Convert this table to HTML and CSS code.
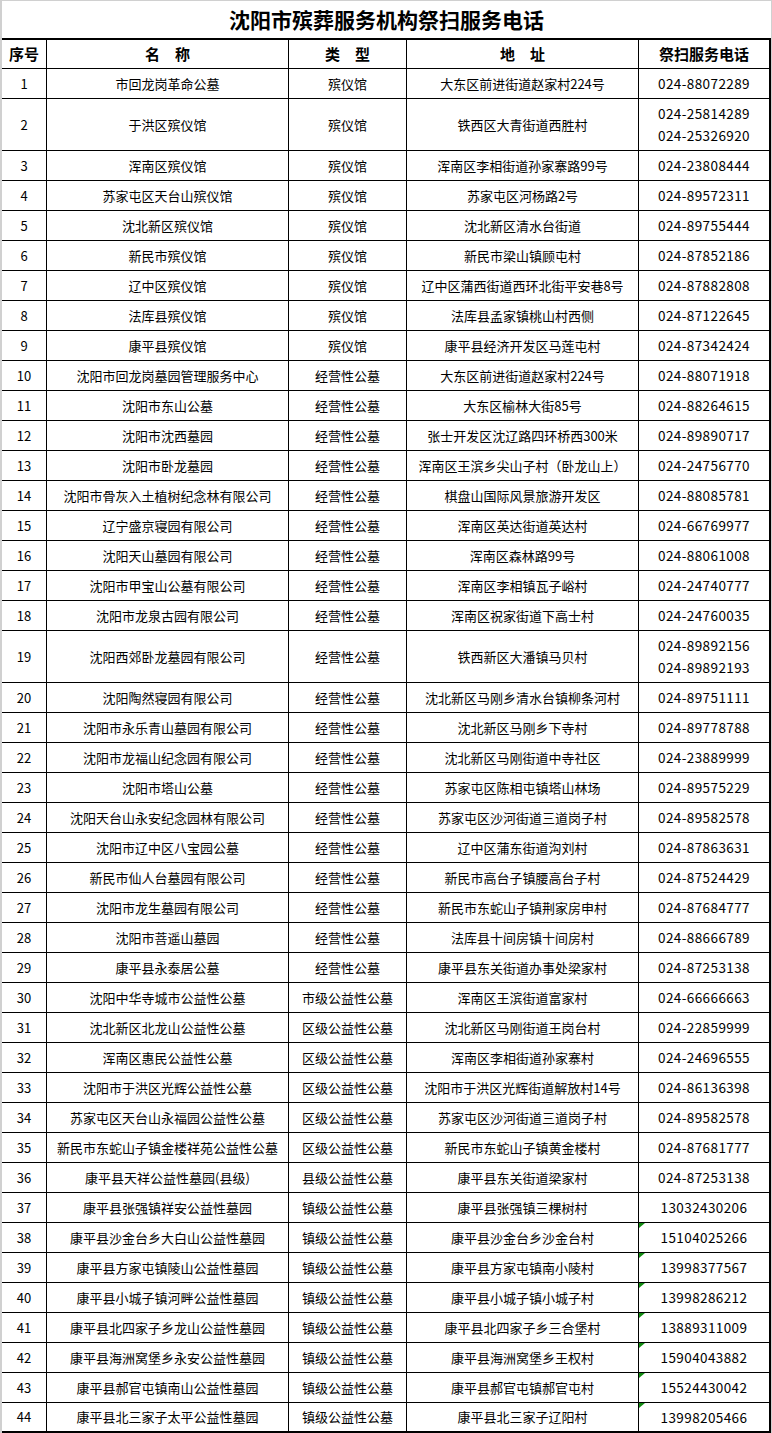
FILE: index.html
```html
<!DOCTYPE html>
<html lang="zh-CN">
<head>
<meta charset="utf-8">
<title>沈阳市殡葬服务机构祭扫服务电话</title>
<link rel="stylesheet" href="styles.css">
</head>
<body>
<div class="sheet">
  <div class="title">沈阳市殡葬服务机构祭扫服务电话</div>
  <table class="grid">
    <colgroup>
      <col class="c-no"><col class="c-name"><col class="c-type"><col class="c-addr"><col class="c-tel">
    </colgroup>
    <thead>
      <tr class="head"><th>序号</th><th>名　称</th><th>类　型</th><th>地　址</th><th class="tel">祭扫服务电话</th></tr>
    </thead>
    <tbody>
      <tr><td>1</td><td>市回龙岗革命公墓</td><td>殡仪馆</td><td>大东区前进街道赵家村224号</td><td class="tel">024-88072289</td></tr>
      <tr class="tall"><td>2</td><td>于洪区殡仪馆</td><td>殡仪馆</td><td>铁西区大青街道西胜村</td><td class="tel"><span class="ln">024-25814289</span><span class="ln">024-25326920</span></td></tr>
      <tr><td>3</td><td>浑南区殡仪馆</td><td>殡仪馆</td><td>浑南区李相街道孙家寨路99号</td><td class="tel">024-23808444</td></tr>
      <tr><td>4</td><td>苏家屯区天台山殡仪馆</td><td>殡仪馆</td><td>苏家屯区河杨路2号</td><td class="tel">024-89572311</td></tr>
      <tr><td>5</td><td>沈北新区殡仪馆</td><td>殡仪馆</td><td>沈北新区清水台街道</td><td class="tel">024-89755444</td></tr>
      <tr><td>6</td><td>新民市殡仪馆</td><td>殡仪馆</td><td>新民市梁山镇顾屯村</td><td class="tel">024-87852186</td></tr>
      <tr><td>7</td><td>辽中区殡仪馆</td><td>殡仪馆</td><td>辽中区蒲西街道西环北街平安巷8号</td><td class="tel">024-87882808</td></tr>
      <tr><td>8</td><td>法库县殡仪馆</td><td>殡仪馆</td><td>法库县孟家镇桃山村西侧</td><td class="tel">024-87122645</td></tr>
      <tr><td>9</td><td>康平县殡仪馆</td><td>殡仪馆</td><td>康平县经济开发区马莲屯村</td><td class="tel">024-87342424</td></tr>
      <tr><td>10</td><td>沈阳市回龙岗墓园管理服务中心</td><td>经营性公墓</td><td>大东区前进街道赵家村224号</td><td class="tel">024-88071918</td></tr>
      <tr><td>11</td><td>沈阳市东山公墓</td><td>经营性公墓</td><td>大东区榆林大街85号</td><td class="tel">024-88264615</td></tr>
      <tr><td>12</td><td>沈阳市沈西墓园</td><td>经营性公墓</td><td>张士开发区沈辽路四环桥西300米</td><td class="tel">024-89890717</td></tr>
      <tr><td>13</td><td>沈阳市卧龙墓园</td><td>经营性公墓</td><td>浑南区王滨乡尖山子村（卧龙山上）</td><td class="tel">024-24756770</td></tr>
      <tr><td>14</td><td>沈阳市骨灰入土植树纪念林有限公司</td><td>经营性公墓</td><td>棋盘山国际风景旅游开发区</td><td class="tel">024-88085781</td></tr>
      <tr><td>15</td><td>辽宁盛京寝园有限公司</td><td>经营性公墓</td><td>浑南区英达街道英达村</td><td class="tel">024-66769977</td></tr>
      <tr><td>16</td><td>沈阳天山墓园有限公司</td><td>经营性公墓</td><td>浑南区森林路99号</td><td class="tel">024-88061008</td></tr>
      <tr><td>17</td><td>沈阳市甲宝山公墓有限公司</td><td>经营性公墓</td><td>浑南区李相镇瓦子峪村</td><td class="tel">024-24740777</td></tr>
      <tr><td>18</td><td>沈阳市龙泉古园有限公司</td><td>经营性公墓</td><td>浑南区祝家街道下高士村</td><td class="tel">024-24760035</td></tr>
      <tr class="tall"><td>19</td><td>沈阳西郊卧龙墓园有限公司</td><td>经营性公墓</td><td>铁西新区大潘镇马贝村</td><td class="tel"><span class="ln">024-89892156</span><span class="ln">024-89892193</span></td></tr>
      <tr><td>20</td><td>沈阳陶然寝园有限公司</td><td>经营性公墓</td><td>沈北新区马刚乡清水台镇柳条河村</td><td class="tel">024-89751111</td></tr>
      <tr><td>21</td><td>沈阳市永乐青山墓园有限公司</td><td>经营性公墓</td><td>沈北新区马刚乡下寺村</td><td class="tel">024-89778788</td></tr>
      <tr><td>22</td><td>沈阳市龙福山纪念园有限公司</td><td>经营性公墓</td><td>沈北新区马刚街道中寺社区</td><td class="tel">024-23889999</td></tr>
      <tr><td>23</td><td>沈阳市塔山公墓</td><td>经营性公墓</td><td>苏家屯区陈相屯镇塔山林场</td><td class="tel">024-89575229</td></tr>
      <tr><td>24</td><td>沈阳天台山永安纪念园林有限公司</td><td>经营性公墓</td><td>苏家屯区沙河街道三道岗子村</td><td class="tel">024-89582578</td></tr>
      <tr><td>25</td><td>沈阳市辽中区八宝园公墓</td><td>经营性公墓</td><td>辽中区蒲东街道沟刘村</td><td class="tel">024-87863631</td></tr>
      <tr><td>26</td><td>新民市仙人台墓园有限公司</td><td>经营性公墓</td><td>新民市高台子镇腰高台子村</td><td class="tel">024-87524429</td></tr>
      <tr><td>27</td><td>沈阳市龙生墓园有限公司</td><td>经营性公墓</td><td>新民市东蛇山子镇荆家房申村</td><td class="tel">024-87684777</td></tr>
      <tr><td>28</td><td>沈阳市菩遥山墓园</td><td>经营性公墓</td><td>法库县十间房镇十间房村</td><td class="tel">024-88666789</td></tr>
      <tr><td>29</td><td>康平县永泰居公墓</td><td>经营性公墓</td><td>康平县东关街道办事处梁家村</td><td class="tel">024-87253138</td></tr>
      <tr><td>30</td><td>沈阳中华寺城市公益性公墓</td><td>市级公益性公墓</td><td>浑南区王滨街道富家村</td><td class="tel">024-66666663</td></tr>
      <tr><td>31</td><td>沈北新区北龙山公益性公墓</td><td>区级公益性公墓</td><td>沈北新区马刚街道王岗台村</td><td class="tel">024-22859999</td></tr>
      <tr><td>32</td><td>浑南区惠民公益性公墓</td><td>区级公益性公墓</td><td>浑南区李相街道孙家寨村</td><td class="tel">024-24696555</td></tr>
      <tr><td>33</td><td>沈阳市于洪区光辉公益性公墓</td><td>区级公益性公墓</td><td>沈阳市于洪区光辉街道解放村14号</td><td class="tel">024-86136398</td></tr>
      <tr><td>34</td><td>苏家屯区天台山永福园公益性公墓</td><td>区级公益性公墓</td><td>苏家屯区沙河街道三道岗子村</td><td class="tel">024-89582578</td></tr>
      <tr><td>35</td><td>新民市东蛇山子镇金楼祥苑公益性公墓</td><td>区级公益性公墓</td><td>新民市东蛇山子镇黄金楼村</td><td class="tel">024-87681777</td></tr>
      <tr><td>36</td><td>康平县天祥公益性墓园(县级)</td><td>县级公益性公墓</td><td>康平县东关街道梁家村</td><td class="tel">024-87253138</td></tr>
      <tr><td>37</td><td>康平县张强镇祥安公益性墓园</td><td>镇级公益性公墓</td><td>康平县张强镇三棵树村</td><td class="tel">13032430206</td></tr>
      <tr><td>38</td><td>康平县沙金台乡大白山公益性墓园</td><td>镇级公益性公墓</td><td>康平县沙金台乡沙金台村</td><td class="tel flag">15104025266</td></tr>
      <tr><td>39</td><td>康平县方家屯镇陵山公益性墓园</td><td>镇级公益性公墓</td><td>康平县方家屯镇南小陵村</td><td class="tel flag">13998377567</td></tr>
      <tr><td>40</td><td>康平县小城子镇河畔公益性墓园</td><td>镇级公益性公墓</td><td>康平县小城子镇小城子村</td><td class="tel flag">13998286212</td></tr>
      <tr><td>41</td><td>康平县北四家子乡龙山公益性墓园</td><td>镇级公益性公墓</td><td>康平县北四家子乡三合堡村</td><td class="tel flag">13889311009</td></tr>
      <tr><td>42</td><td>康平县海洲窝堡乡永安公益性墓园</td><td>镇级公益性公墓</td><td>康平县海洲窝堡乡王权村</td><td class="tel flag">15904043882</td></tr>
      <tr><td>43</td><td>康平县郝官屯镇南山公益性墓园</td><td>镇级公益性公墓</td><td>康平县郝官屯镇郝官屯村</td><td class="tel flag">15524430042</td></tr>
      <tr class="last"><td>44</td><td>康平县北三家子太平公益性墓园</td><td>镇级公益性公墓</td><td>康平县北三家子辽阳村</td><td class="tel flag">13998205466</td></tr>
    </tbody>
  </table>
</div>
</body>
</html>
```
FILE: styles.css
```css
html, body {
  margin: 0;
  padding: 0;
  background: #ffffff;
}
body {
  font-family: "Noto Sans CJK SC", "Noto Sans", sans-serif;
  color: #000;
}
.sheet {
  width: 769px;
  border-top: 1px solid #d0d0d0;
  border-left: 2px solid #d0d0d0;
  border-right: 1px solid #d0d0d0;
  background: #fff;
}
.title {
  height: 37px;
  line-height: 36px;
  text-align: center;
  font-size: 21px;
  font-weight: 700;
}
.grid {
  width: 769px;
  table-layout: fixed;
  border-collapse: separate;
  border-spacing: 0;
  border-top: 2px solid #000;
}
.c-no { width: 45px; }
.c-name { width: 242px; }
.c-type { width: 118px; }
.c-addr { width: 232px; }
.c-tel { width: 132px; }
.grid th, .grid td {
  box-sizing: border-box;
  padding: 0 0 1px 0;
  border-right: 1px solid #000;
  border-bottom: 1px solid #000;
  text-align: center;
  vertical-align: middle;
  white-space: nowrap;
  overflow: hidden;
}
.grid th {
  font-size: 15px;
  font-weight: 700;
}
.grid td {
  font-size: 13px;
  font-weight: 400;
}
.grid .tel {
  border-right: 2px solid #000;
}
.grid td.tel {
  font-size: 13.5px;
  letter-spacing: 0.4px;
}
.head { height: 29px; }
.grid tbody tr { height: 30px; }
.grid tbody tr.tall { height: 52px; }
.ln {
  display: block;
  line-height: 22px;
}
.grid tr.last td {
  border-bottom: 2px solid #000;
}
.flag {
  position: relative;
}
.flag::before {
  content: "";
  position: absolute;
  left: 0;
  top: 0;
  width: 6px;
  height: 5px;
  background: #128a12;
  clip-path: polygon(0 0, 100% 0, 0 100%);
}
```
